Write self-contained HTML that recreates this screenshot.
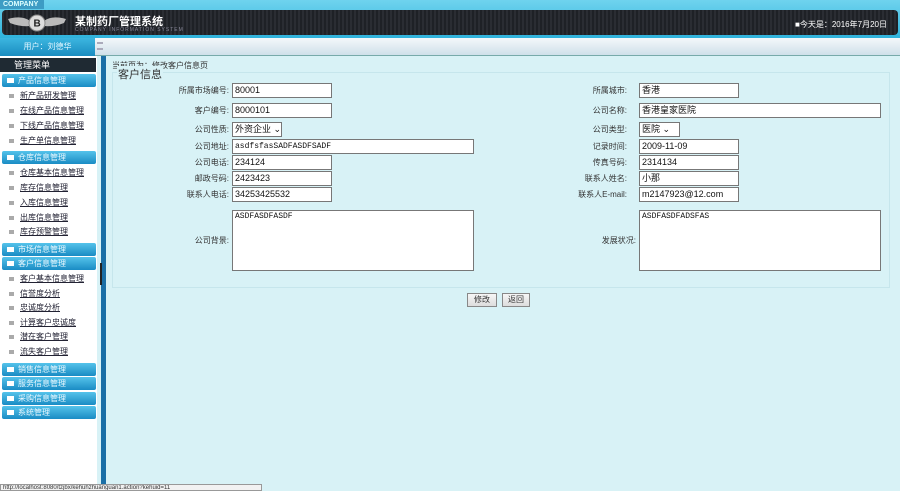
<!DOCTYPE html>
<html><head><meta charset="utf-8"><style>
*{margin:0;padding:0;box-sizing:border-box}
body{width:900px;height:491px;overflow:hidden;position:relative;background:#d8f2f6;font-family:"Liberation Sans","Noto Sans CJK SC",sans-serif;font-size:9px;color:#333}
.a{position:absolute}
#top{left:0;top:0;width:900px;height:38px;background:linear-gradient(#6fd3ee,#2fb3dc)}
#band{left:2px;top:10px;width:896px;height:25px;background:repeating-linear-gradient(90deg,#2a2d33 0 2px,#1e2126 2px 4px);border-radius:4px}
#comp{left:0;top:0;height:9px;width:44px;background:#3d9cc4;color:#dff;font-size:7px;font-weight:bold;line-height:9px;padding-left:3px}
#bar2{left:95px;top:38px;width:805px;height:18px;background:linear-gradient(#f4f8fb,#cfe0ea);border-bottom:1px solid #7aa}
#user{left:0;top:38px;width:95px;height:18px;background:linear-gradient(#3cb6e0,#1a8cc0);color:#e0f6ff;text-align:center;line-height:18px;font-size:8px}
#side{left:0;top:56px;width:97px;height:435px;background:#fff}
#mhead{left:0;top:58px;width:96px;height:14px;background:#1f2a33;color:#fff;font-size:9px;line-height:14px;padding-left:14px}
.h{position:absolute;left:2px;width:94px;height:13px;background:linear-gradient(#55c3ea,#1a8cc4);color:#eaf8ff;font-size:8px;line-height:13px;padding-left:16px;border-radius:2px}
.h:before{content:"";position:absolute;left:5px;top:4px;width:7px;height:5px;background:#fff}
.i{position:absolute;left:9px;font-size:8px;color:#223;text-decoration:underline;line-height:12px;padding-left:11px}
.i:before{content:"";position:absolute;left:0;top:4px;width:5px;height:4px;background:#aaa}
#vb{left:101px;top:56px;width:5px;height:435px;background:#1a6fa6}
#fs{left:112px;top:72px;width:778px;height:216px;border:1px solid #c6e6ec}
.l{position:absolute;text-align:right;font-size:8px;color:#333;line-height:15px}
.in{position:absolute;height:15px;border:1px solid #777;background:#fff;font-size:9px;line-height:13px;padding-left:2px;color:#111;white-space:nowrap;overflow:hidden}
.mono{font-family:"Liberation Mono",monospace;font-size:8px}
.btn{position:absolute;top:293px;height:14px;border:1px solid #888;background:linear-gradient(#f6f6f6,#ddd);font-size:8px;text-align:center;line-height:12px}
</style></head><body>
<div class="a" id="top"></div>
<div class="a" id="band"></div>
<div class="a" id="comp">COMPANY</div>
<svg class="a" style="left:6px;top:11px" width="62" height="24"><path d="M2 8 Q16 4 24 10 L24 15 Q14 16 4 12Z M60 8 Q46 4 38 10 L38 15 Q48 16 58 12Z" fill="#bbb"/><circle cx="31" cy="12" r="8" fill="#ddd" stroke="#888"/><text x="27.5" y="15.5" font-size="10" font-weight="bold" fill="#222" font-family="Liberation Sans">B</text></svg>
<div class="a" style="left:75px;top:13px;color:#fff;font-size:11px;font-weight:bold">某制药厂管理系统</div>
<div class="a" style="left:75px;top:27px;color:#889;font-size:5px;letter-spacing:1px">COMPANY INFORMATION SYSTEM</div>
<div class="a" style="left:795px;top:19px;color:#fff;font-size:8px">■今天是：2016年7月20日</div>
<div class="a" id="bar2"></div>
<div class="a" id="user">用户：刘德华</div>
<div class="a" style="left:97px;top:42px;width:6px;height:8px;border-top:2px solid #aab;border-bottom:2px solid #aab"></div>
<div class="a" id="side"></div>
<div class="a" id="mhead">管理菜单</div>
<div class="h" style="top:74px">产品信息管理</div>
<div class="i" style="top:90px">新产品研发管理</div>
<div class="i" style="top:105px">在线产品信息管理</div>
<div class="i" style="top:120px">下线产品信息管理</div>
<div class="i" style="top:135px">生产单信息管理</div>
<div class="h" style="top:151px">仓库信息管理</div>
<div class="i" style="top:167px">仓库基本信息管理</div>
<div class="i" style="top:182px">库存信息管理</div>
<div class="i" style="top:197px">入库信息管理</div>
<div class="i" style="top:212px">出库信息管理</div>
<div class="i" style="top:226px">库存预警管理</div>
<div class="h" style="top:243px">市场信息管理</div>
<div class="h" style="top:257px">客户信息管理</div>
<div class="i" style="top:273px">客户基本信息管理</div>
<div class="i" style="top:288px">信誉度分析</div>
<div class="i" style="top:302px">忠诚度分析</div>
<div class="i" style="top:317px">计算客户忠诚度</div>
<div class="i" style="top:331px">潜在客户管理</div>
<div class="i" style="top:346px">流失客户管理</div>
<div class="h" style="top:363px">销售信息管理</div>
<div class="h" style="top:377px">服务信息管理</div>
<div class="h" style="top:392px">采购信息管理</div>
<div class="h" style="top:406px">系统管理</div>
<div class="a" id="vb"></div>
<div class="a" style="left:100px;top:263px;width:2px;height:22px;background:#222"></div>
<div class="a" style="left:112px;top:60px;font-size:8px">当前页为：修改客户信息页</div>
<div class="a" id="fs"></div>
<div class="a" style="left:117px;top:66px;font-size:11px;background:#d8f2f6;padding:0 1px">客户信息</div>

<div class="l" style="left:120px;width:109px;top:83px">所属市场编号:</div><div class="in" style="left:232px;top:83px;width:100px">80001</div>
<div class="l" style="left:120px;width:109px;top:103px">客户编号:</div><div class="in" style="left:232px;top:103px;width:100px">8000101</div>
<div class="l" style="left:120px;width:109px;top:122px">公司性质:</div><div class="in" style="left:232px;top:122px;width:50px">外资企业 ⌄</div>
<div class="l" style="left:120px;width:109px;top:139px">公司地址:</div><div class="in mono" style="left:232px;top:139px;width:242px">asdfsfasSADFASDFSADF</div>
<div class="l" style="left:120px;width:109px;top:155px">公司电话:</div><div class="in" style="left:232px;top:155px;width:100px">234124</div>
<div class="l" style="left:120px;width:109px;top:171px">邮政号码:</div><div class="in" style="left:232px;top:171px;width:100px">2423423</div>
<div class="l" style="left:120px;width:109px;top:187px">联系人电话:</div><div class="in" style="left:232px;top:187px;width:100px">34253425532</div>
<div class="l" style="left:120px;width:109px;top:233px">公司背景:</div><div class="in mono" style="left:232px;top:210px;width:242px;height:61px;line-height:11px">ASDFASDFASDF</div>

<div class="l" style="left:520px;width:107px;top:83px">所属城市:</div><div class="in" style="left:639px;top:83px;width:100px">香港</div>
<div class="l" style="left:520px;width:107px;top:103px">公司名称:</div><div class="in" style="left:639px;top:103px;width:242px">香港皇家医院</div>
<div class="l" style="left:520px;width:107px;top:122px">公司类型:</div><div class="in" style="left:639px;top:122px;width:41px">医院 ⌄</div>
<div class="l" style="left:520px;width:107px;top:139px">记录时间:</div><div class="in" style="left:639px;top:139px;width:100px">2009-11-09</div>
<div class="l" style="left:520px;width:107px;top:155px">传真号码:</div><div class="in" style="left:639px;top:155px;width:100px">2314134</div>
<div class="l" style="left:520px;width:107px;top:171px">联系人姓名:</div><div class="in" style="left:639px;top:171px;width:100px">小那</div>
<div class="l" style="left:520px;width:107px;top:187px">联系人E-mail:</div><div class="in" style="left:639px;top:187px;width:100px">m2147923@12.com</div>
<div class="l" style="left:520px;width:116px;top:233px">发展状况:</div><div class="in mono" style="left:639px;top:210px;width:242px;height:61px;line-height:11px">ASDFASDFADSFAS</div>

<div class="btn" style="left:467px;width:30px">修改</div>
<div class="btn" style="left:502px;width:28px">返回</div>
<div class="a" style="left:0;top:484px;width:262px;height:7px;background:#f2f2f2;border:1px solid #999;font-size:6px;line-height:6px;color:#333;padding-left:2px;overflow:hidden">http://localhost:8080/tzjbx/kehuhzhuanguan1.action?kehuid=11</div>
</body></html>
